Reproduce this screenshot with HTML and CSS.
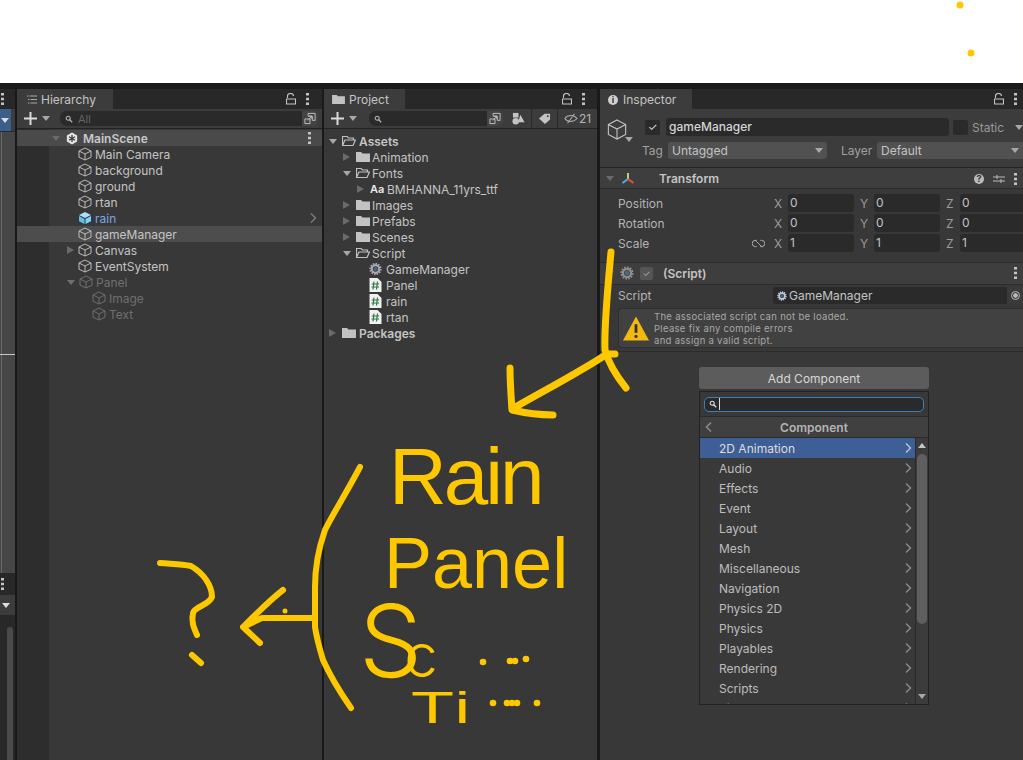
FILE: index.html
```html
<!DOCTYPE html>
<html lang="en">
<head>
<meta charset="utf-8">
<title>Unity Editor</title>
<link rel="stylesheet" href="styles.css">
</head>
<body>
<svg width="0" height="0" class="defs">
  <defs>
    <symbol id="cube" viewBox="0 0 14 14"><path d="M7 1 13 4v6.200L7 13 1 10.200V4zM1 4l6 3 6-3M7 7v6" fill="none" stroke="currentColor" stroke-width="1"/></symbol>
    <symbol id="folder" viewBox="0 0 14 12"><path d="M0 1h5l1.500 1.500H14V11H0z" fill="#c2c2c2"/></symbol>
    <symbol id="open" viewBox="0 0 14 12"><path d="M.5 10.500V1.500h4.500l1.500 1.500h5v2M.5 10.500 3 5h10.500L11 10.500z" fill="none" stroke="#c2c2c2" stroke-width="1.200"/></symbol>
    <symbol id="gear" viewBox="0 0 14 14"><circle cx="7" cy="7" r="5.300" fill="none" stroke="currentColor" stroke-width="2.600" stroke-dasharray="1.600 1.100"/><circle cx="7" cy="7" r="4" fill="none" stroke="currentColor" stroke-width="2.200"/><circle cx="7" cy="7" r="2.200" fill="#46698f"/></symbol>
    <symbol id="script" viewBox="0 0 12 14"><path d="M0 0h8l4 4v10H0z" fill="#f1f1f1"/><path d="M4.500 3.500 3.500 11.500M8 3.500 7 11.500M2.200 6h7.600M2 9h7.600" stroke="#2c7a3f" stroke-width="1.200" fill="none"/></symbol>
    <symbol id="chev" viewBox="0 0 8 12"><path d="M2 1.500 6.500 6 2 10.500" fill="none" stroke="currentColor" stroke-width="1.400"/></symbol>
    <symbol id="search" viewBox="0 0 10 10"><circle cx="4" cy="4" r="2.500" fill="none" stroke="currentColor" stroke-width="1.400"/><path d="M6 6l3 3" stroke="currentColor" stroke-width="1.600"/></symbol>
    <symbol id="lock" viewBox="0 0 10 12"><path d="M1.500 5V3a3 2.500 0 0 1 6 0M.5 6h9v5H.5z" fill="none" stroke="currentColor" stroke-width="1.100"/></symbol>
    <symbol id="pop" viewBox="0 0 14 14"><path d="M5 1.500h7.500V9H9.500V4.500H5zM1.500 7.500H7v5H1.500zM5 9l4-4.500M6 4.500h3V7.500" fill="none" stroke="currentColor" stroke-width="1"/></symbol>
    <symbol id="plus" viewBox="0 0 13 13"><path d="M6.500 0v13M0 6.500h13" stroke="#dcdcdc" stroke-width="2" fill="none"/></symbol>
    <symbol id="kebab" viewBox="0 0 3 12"><path d="M0 0h3v2.500H0zM0 4.700h3v2.500H0zM0 9.500h3V12H0z" fill="#c4c4c4"/></symbol>
  </defs>
</svg>

<div class="top"></div>
<div class="editor">
  <aside class="sliver">
    <div class="sliver-dots"><svg class="ic dots"><use href="#kebab"/></svg></div>
    <div class="sliver-btn"><i class="tri down"></i></div>
    <div class="sliver-body"></div>
    <div class="sliver-dots lower"><svg class="ic dots"><use href="#kebab"/></svg></div>
    <div class="sliver-btn small"><i class="tri down"></i></div>
    <div class="sliver-scroll"></div>
  </aside>

  <section class="panel hierarchy">
    <div class="tabbar">
      <div class="tab hier-tab"><svg class="ic listi" viewBox="0 0 10 9"><path d="M2.500 1H10M3.500 4.500H10M3.500 8H10M0 1h1.500M1 4.500h1.500M1 8h1.500" stroke="#aaa" fill="none"/></svg>Hierarchy</div>
      <div class="tab-tools"><svg class="ic lock"><use href="#lock"/></svg><svg class="ic dots"><use href="#kebab"/></svg></div>
    </div>
    <div class="toolbar">
      <svg class="ic plus"><use href="#plus"/></svg><i class="tri down"></i>
      <div class="search grow"><svg class="ic s"><use href="#search"/></svg><span class="ph">All</span><svg class="ic pop"><use href="#pop"/></svg></div>
    </div>
    <div class="tree">
      <div class="scene-row"><i class="tri down dim"></i><svg class="unity" viewBox="0 0 14 14"><path d="M7 0 13 3.500v7L7 14 1 10.500v-7z" fill="#e4e4e4"/><path d="M7 3v8M3.500 9 7 7l3.500 2M3.500 5 7 7l3.500-2" stroke="#3c3c3c" stroke-width="1.500" fill="none"/></svg><b>MainScene</b><svg class="ic dots right"><use href="#kebab"/></svg></div>
      <div class="row l1"><svg class="ic cube"><use href="#cube"/></svg>Main Camera</div>
      <div class="row l1"><svg class="ic cube"><use href="#cube"/></svg>background</div>
      <div class="row l1"><svg class="ic cube"><use href="#cube"/></svg>ground</div>
      <div class="row l1"><svg class="ic cube"><use href="#cube"/></svg>rtan</div>
      <div class="row l1 prefab"><svg class="cube solid" viewBox="0 0 14 14"><path d="M7 1 13 4 7 7 1 4z" fill="#a6e2ff"/><path d="M1 5v5.200L6.500 13V8z" fill="#5ec0f2"/><path d="M13 5v5.200L7.500 13V8z" fill="#7fd2fa"/></svg>rain<svg class="ic chev right"><use href="#chev"/></svg></div>
      <div class="row l1 selected"><svg class="ic cube"><use href="#cube"/></svg>gameManager</div>
      <div class="row l0"><i class="tri rightward"></i><svg class="ic cube"><use href="#cube"/></svg>Canvas</div>
      <div class="row l1"><svg class="ic cube"><use href="#cube"/></svg>EventSystem</div>
      <div class="row l0 off"><i class="tri down"></i><svg class="ic cube"><use href="#cube"/></svg>Panel</div>
      <div class="row l2 off"><svg class="ic cube"><use href="#cube"/></svg>Image</div>
      <div class="row l2 off"><svg class="ic cube"><use href="#cube"/></svg>Text</div>
    </div>
  </section>

  <section class="panel project">
    <div class="tabbar">
      <div class="tab proj-tab"><svg class="ic folder"><use href="#folder"/></svg>Project</div>
      <div class="tab-tools"><svg class="ic lock"><use href="#lock"/></svg><svg class="ic dots"><use href="#kebab"/></svg></div>
    </div>
    <div class="toolbar">
      <svg class="ic plus"><use href="#plus"/></svg><i class="tri down"></i>
      <div class="search proj-search"><svg class="ic s"><use href="#search"/></svg><svg class="ic pop"><use href="#pop"/></svg></div>
      <div class="tb-btn"><svg class="ic tbi" viewBox="0 0 14 14"><circle cx="4" cy="10" r="3.500" fill="#c4c4c4"/><rect x="1" y="1" width="6" height="5" fill="#c4c4c4"/><path d="M9 3l4.500 8H6.500z" fill="#c4c4c4"/></svg></div>
      <div class="tb-btn"><svg class="ic tbi" viewBox="0 0 14 14"><path d="M1 7 7 2h6v6l-5.500 5z" fill="#c4c4c4"/><circle cx="10.500" cy="4.500" r="1" fill="#3c3c3c"/></svg></div>
      <div class="tb-btn eye"><svg class="ic eyei" viewBox="0 0 16 12"><path d="M1 6c3-4.500 10-4.500 14 0-4 4.500-11 4.500-14 0zM12 .5 4 11.500" fill="none" stroke="#aaa" stroke-width="1.200"/></svg>21</div>
    </div>
    <div class="tree files">
      <div class="frow b0"><i class="tri down"></i><svg class="ic fold"><use href="#open"/></svg><b>Assets</b></div>
      <div class="frow b1"><i class="tri rightward"></i><svg class="ic fold"><use href="#folder"/></svg>Animation</div>
      <div class="frow b1"><i class="tri down"></i><svg class="ic fold"><use href="#open"/></svg>Fonts</div>
      <div class="frow b2"><i class="tri rightward"></i><b class="aa">Aa</b>BMHANNA_11yrs_ttf</div>
      <div class="frow b1"><i class="tri rightward"></i><svg class="ic fold"><use href="#folder"/></svg>Images</div>
      <div class="frow b1"><i class="tri rightward"></i><svg class="ic fold"><use href="#folder"/></svg>Prefabs</div>
      <div class="frow b1"><i class="tri rightward"></i><svg class="ic fold"><use href="#folder"/></svg>Scenes</div>
      <div class="frow b1"><i class="tri down"></i><svg class="ic fold"><use href="#open"/></svg>Script</div>
      <div class="frow b3"><svg class="ic file gear-c"><use href="#gear"/></svg>GameManager</div>
      <div class="frow b3"><svg class="ic file"><use href="#script"/></svg>Panel</div>
      <div class="frow b3"><svg class="ic file"><use href="#script"/></svg>rain</div>
      <div class="frow b3"><svg class="ic file"><use href="#script"/></svg>rtan</div>
      <div class="frow b0"><i class="tri rightward"></i><svg class="ic fold"><use href="#folder"/></svg><b>Packages</b></div>
    </div>
  </section>

  <section class="panel inspector">
    <div class="tabbar">
      <div class="tab insp-tab"><span class="info">i</span>Inspector</div>
      <div class="tab-tools"><svg class="ic lock"><use href="#lock"/></svg><svg class="ic dots"><use href="#kebab"/></svg></div>
    </div>
    <div class="go-head">
      <div class="go-icon"><svg class="big-cube" viewBox="0 0 22 24"><path d="M11 1.500 20.500 6.500v11L11 22.500 1.500 17.500v-11zM1.500 6.500 11 11.500l9.500-5M11 11.500v11" fill="none" stroke="#c4c4c4" stroke-width="1.200"/></svg><i class="tri down small-tri"></i></div>
      <div class="go-fields">
        <div class="go-line">
          <span class="check on">✓</span>
          <div class="namebox">gameManager</div>
          <span class="check"></span>
          <span class="static">Static</span>
          <i class="tri down"></i>
        </div>
        <div class="go-line second">
          <span class="lbl">Tag</span>
          <div class="drop tag">Untagged<i class="tri down"></i></div>
          <span class="lbl layer">Layer</span>
          <div class="drop lay">Default<i class="tri down"></i></div>
        </div>
      </div>
    </div>

    <div class="comp-head transform">
      <i class="tri down dim"></i>
      <svg class="axis" viewBox="0 0 14 14"><path d="M7 7V1" stroke="#b5d56a" stroke-width="2"/><path d="M7 7 1.500 11" stroke="#4cb4e0" stroke-width="2"/><path d="M7 7l5.500 4" stroke="#e0533f" stroke-width="2"/></svg>
      <b class="ct">Transform</b>
      <span class="comp-tools"><span class="help">?</span><svg class="ic sliders" viewBox="0 0 12 12"><path d="M0 4h12M0 8h12M4 2v4M8 6v4" stroke="#bbb" fill="none"/></svg><svg class="ic dots"><use href="#kebab"/></svg></span>
    </div>
    <div class="vecs">
      <div class="vec"><span class="vname">Position</span><span class="a">X</span><span class="num">0</span><span class="a">Y</span><span class="num">0</span><span class="a">Z</span><span class="num last">0</span></div>
      <div class="vec"><span class="vname">Rotation</span><span class="a">X</span><span class="num">0</span><span class="a">Y</span><span class="num">0</span><span class="a">Z</span><span class="num last">0</span></div>
      <div class="vec"><span class="vname">Scale<svg class="ic link" viewBox="0 0 14 10"><path d="M5 1.500H3.500a3.500 3.500 0 0 0 0 7H5M9 1.500h1.500a3.500 3.500 0 0 1 0 7H9M3 1l8 8" fill="none" stroke="#aaa" stroke-width="1.100"/></svg></span><span class="a">X</span><span class="num">1</span><span class="a">Y</span><span class="num">1</span><span class="a">Z</span><span class="num last">1</span></div>
    </div>

    <div class="comp-head script-head">
      <i class="tri down dim"></i>
      <svg class="ic gear2"><use href="#gear"/></svg>
      <span class="check faint">✓</span>
      <b class="ct">(Script)</b>
      <span class="comp-tools"><svg class="ic dots"><use href="#kebab"/></svg></span>
    </div>
    <div class="script-row"><span class="vname">Script</span><div class="objfield"><svg class="ic mini"><use href="#gear"/></svg>GameManager<span class="target"><i></i></span></div></div>
    <div class="warn">
      <svg class="warn-ic" viewBox="0 0 24 24"><path d="M12 1 24 23H0z" fill="#f4b90f"/><path d="M12 8v8" stroke="#333" stroke-width="2.600"/><circle cx="12" cy="19.300" r="1.500" fill="#333"/></svg>
      <p>The associated script can not be loaded.<br>Please fix any compile errors<br>and assign a valid script.</p>
    </div>
    <div class="comp-end"></div>

    <div class="add-wrap">
      <button class="add-btn">Add Component</button>
      <div class="popup">
        <div class="pop-search"><div class="pop-input"><svg class="ic s2"><use href="#search"/></svg><span class="caret"></span></div></div>
        <div class="pop-title"><svg class="ic back" viewBox="0 0 8 12"><path d="M6 1.500 1.500 6 6 10.500" fill="none" stroke="#8a8a8a" stroke-width="1.600"/></svg>Component</div>
        <div class="pop-body">
          <ul class="menu">
            <li class="active">2D Animation<svg class="ic chev"><use href="#chev"/></svg></li>
            <li>Audio<svg class="ic chev"><use href="#chev"/></svg></li>
            <li>Effects<svg class="ic chev"><use href="#chev"/></svg></li>
            <li>Event<svg class="ic chev"><use href="#chev"/></svg></li>
            <li>Layout<svg class="ic chev"><use href="#chev"/></svg></li>
            <li>Mesh<svg class="ic chev"><use href="#chev"/></svg></li>
            <li>Miscellaneous<svg class="ic chev"><use href="#chev"/></svg></li>
            <li>Navigation<svg class="ic chev"><use href="#chev"/></svg></li>
            <li>Physics 2D<svg class="ic chev"><use href="#chev"/></svg></li>
            <li>Physics<svg class="ic chev"><use href="#chev"/></svg></li>
            <li>Playables<svg class="ic chev"><use href="#chev"/></svg></li>
            <li>Rendering<svg class="ic chev"><use href="#chev"/></svg></li>
            <li>Scripts<svg class="ic chev"><use href="#chev"/></svg></li>
            <li>Tilemap<svg class="ic chev"><use href="#chev"/></svg></li>
          </ul>
          <div class="scrollbar"><i class="tri up"></i><div class="thumb"></div><i class="tri down"></i></div>
        </div>
      </div>
    </div>
  </section>
</div>

<svg class="marks" viewBox="0 0 1023 760" width="1023" height="760">
  <g fill="none" stroke="#fec800" stroke-width="6" stroke-linecap="round" stroke-linejoin="round">
    <path d="M611 252C608 285 604 325 605 350 609 365 618 378 626 388" stroke-width="7"/>
    <path d="M615 354H607C580 372 545 390 512 409M510 368C510 382 511 396 512 410 525 413 540 415 553 415" stroke-width="7"/>
    <path d="M360 467C348 490 334 512 325 530 318 550 315 570 315 587V627C317 640 320 650 323 660 332 680 342 695 351 708"/>
    <path d="M313 618H262L243 627 260 643M243 627C255 615 270 600 283 590"/>
    <path d="M160 563C172 564 182 564 191 566 203 573 212 585 212 597 208 606 195 606 193 613 191 622 194 628 197 635M192 655 201 663"/>
  </g>
  <g fill="#fec800">
    <circle cx="960" cy="5" r="3.500"/>
    <circle cx="971" cy="53" r="3.500"/>
    <circle cx="285" cy="611" r="2.500"/>
    <circle cx="483" cy="662" r="3.300"/><circle cx="510" cy="661" r="3.300"/><circle cx="515" cy="661" r="3.300"/><circle cx="526" cy="659" r="3.300"/>
    <circle cx="493" cy="703" r="3.300"/><circle cx="507" cy="703" r="3.300"/><circle cx="512" cy="703" r="3.300"/><circle cx="517" cy="703" r="3.300"/><circle cx="537" cy="703" r="3.300"/>
  </g>
</svg>
<div class="note n-rain">Rain</div>
<div class="note n-panel">Panel</div>
<div class="note n-sc">S<span class="n-c">c</span></div>
<div class="note n-ti">Ti</div>
</body>
</html>
```
FILE: styles.css
```css
* { box-sizing: border-box; }
html, body { margin: 0; padding: 0; }
body { width: 1023px; height: 760px; overflow: hidden; background: #fff; position: relative; font-family: Inter, "Noto Sans", "Liberation Sans", sans-serif; font-size: 12px; color: #c4c4c4; }
.defs { position: absolute; }
.top { height: 83px; background: #fff; }
.editor { height: 677px; background: #191919; display: flex; padding-top: 6px; }
.ic { display: inline-block; flex: none; }
.tri { display: inline-block; flex: none; width: 0; height: 0; border-style: solid; border-color: transparent; }
.tri.down { border-width: 5px 4px 0; border-top-color: #a8a8a8; }
.tri.up { border-width: 0 4px 5px; border-bottom-color: #c4c4c4; }
.tri.rightward { border-width: 4.500px 0 4.500px 7px; border-left-color: #6a6a6a; }
.tri.dim { border-top-color: #6a6a6a; }
.dots { width: 3px; height: 12px; }

.sliver { width: 15px; flex: none; display: flex; flex-direction: column; background: #282828; margin-right: 2px; }
.sliver-dots { height: 20px; flex: none; display: flex; align-items: center; padding-left: 1px; }
.sliver-btn { height: 22px; flex: none; background: linear-gradient(90deg, #3a5f8a 11px, #3c3c3c 11px); display: flex; align-items: center; padding-left: 1px; }
.sliver-btn .tri { border-top-color: #ddd; }
.sliver-body { height: 442px; flex: none; background-color: #464646; border-top: 1px solid #2a2a2a; background-image: linear-gradient(#c8c8c8,#c8c8c8), linear-gradient(#6a6a6a,#6a6a6a); background-size: 100% 1px, 1px 100%; background-position: 0 222px, 1px 0; background-repeat: no-repeat; }
.sliver-dots.lower { height: 22px; }
.sliver-btn.small { height: 20px; background: #3c3c3c; padding-left: 2px; }
.sliver-scroll { width: 6px; flex: 1; margin: 12px 0 0 7px; background: #4a4a4a; border-radius: 3px 3px 0 0; }

.panel { background: #383838; display: flex; flex-direction: column; }
.hierarchy { width: 305px; flex: none; margin-right: 2px; }
.project { width: 273px; flex: none; margin-right: 3px; }
.inspector { width: 423px; flex: none; min-width: 0; overflow: hidden; }
.tabbar { height: 20px; background: #282828; display: flex; justify-content: space-between; align-items: stretch; flex: none; }
.tab { background: #3c3c3c; display: flex; align-items: center; font-size: 12px; color: #c4c4c4; padding-top: 1px; }
.hier-tab { width: 96px; padding-left: 10px; }
.proj-tab { width: 81px; padding-left: 8px; }
.insp-tab { width: 92px; padding-left: 8px; }
.listi { width: 10px; height: 9px; margin-right: 4px; }
.proj-tab .folder { width: 13px; height: 11px; margin-right: 4px; }
.info { width: 10px; height: 10px; border-radius: 50%; background: #d0d0d0; color: #333; font-size: 9px; font-weight: 700; line-height: 10px; text-align: center; margin-right: 5px; }
.tab-tools { display: flex; align-items: center; gap: 10px; padding-right: 13px; color: #c4c4c4; }
.project .tab-tools { padding-right: 12px; }
.inspector .tab-tools { padding-right: 6px; }
.lock { width: 10px; height: 12px; }

.toolbar { height: 20px; flex: none; display: flex; align-items: center; background: #3c3c3c; border-bottom: 1px solid #232323; padding-left: 7px; }
.plus { width: 13px; height: 13px; }
.toolbar > .tri { margin: 0 0 0 5px; }
.search { height: 15px; background: #2a2a2a; border-radius: 7px; margin-left: 10px; display: flex; align-items: center; padding-left: 5px; color: #8a8a8a; position: relative; }
.search.grow { flex: 1; margin-right: 4px; }
.proj-search { width: 134px; margin-left: 12px; }
.search .s { width: 8px; height: 8px; color: #b0b0b0; }
.ph { color: #666; margin-left: 5px; font-size: 11px; }
.pop { position: absolute; right: 0; top: 0; height: 15px; width: 16px; color: #c4c4c4; padding: 1px; background: #444; border-radius: 0 5px 5px 0; }
.tb-btn { height: 19px; border-left: 1px solid #2a2a2a; width: 26px; display: flex; align-items: center; justify-content: center; }
.proj-search + .tb-btn { margin-left: 2px; border-left: 0; }
.tbi { width: 13px; height: 13px; }
.tb-btn.eye { flex: 1; color: #b4b4b4; gap: 1px; }
.eyei { width: 14px; height: 11px; }

.tree { flex: 1; }
.hierarchy .tree { padding-top: 1px; background: linear-gradient(#2d2d2d,#2d2d2d) 0 0 / 32px 100% no-repeat; }
.scene-row { height: 16px; background: #4a4a4a; display: flex; align-items: center; padding: 0 11px 0 35px; position: relative; color: #c8c8c8; }
.scene-row b { font-weight: 600; margin-left: 5px; }
.unity { width: 12px; height: 13px; margin-left: 6px; flex: none; }
.right { margin-left: auto; }
.row { height: 16px; display: flex; align-items: center; color: #c4c4c4; white-space: nowrap; }
.cube { width: 14px; height: 14px; margin-right: 3px; color: #bcbcbc; }
.cube.solid { flex: none; }
.l1 { padding-left: 61px; }
.l0 { padding-left: 50px; }
.l0 .tri { margin-right: 4px; }
.l2 { padding-left: 75px; }
.row.off { color: #6f6f6f; }
.row.off .cube { color: #6f6f6f; }
.row.off .tri { border-top-color: #6f6f6f; }
.prefab { color: #7ba6e6; padding-right: 5px; }
.row .chev { width: 8px; height: 12px; color: #7c7c7c; }
.selected { background: #4d4d4d; }

.files { padding-top: 4px; }
.frow { height: 16px; display: flex; align-items: center; color: #c4c4c4; white-space: nowrap; }
.frow .tri { margin-right: 6px; }
.frow .tri.down { margin-right: 5px; }
.frow.b0 { padding-left: 5px; }
.frow.b1 { padding-left: 19px; }
.frow.b2 { padding-left: 33px; }
.frow.b3 { padding-left: 45px; }
.fold { width: 14px; height: 12px; margin-right: 2px; }
.frow.b0 .fold { margin-right: 3px; }
.frow b { font-weight: 600; }
.aa { color: #e8e8e8; width: 17px; font-size: 11px; }
.file { width: 13px; height: 14px; margin-right: 4px; color: #a8aab0; }

.go-head { height: 59px; background: #3c3c3c; border-bottom: 1px solid #232323; display: flex; flex: none; padding: 9px 0 0 7px; overflow: hidden; }
.go-icon { width: 38px; position: relative; flex: none; }
.big-cube { width: 20px; height: 23px; display: block; }
.small-tri { position: absolute; left: 18px; top: 19px; }
.go-fields { flex: 1; display: flex; flex-direction: column; gap: 6px; min-width: 0; }
.go-line { display: flex; align-items: center; height: 18px; white-space: nowrap; }
.check { width: 15px; height: 15px; background: #2a2a2a; border-radius: 2px; flex: none; text-align: center; line-height: 15px; color: #ddd; font-size: 11px; }
.namebox { width: 283px; height: 18px; margin: 0 4px 0 6px; background: #2a2a2a; border-radius: 3px; padding-left: 3px; line-height: 18px; color: #d4d4d4; font-weight: 500; flex: none; }
.static { margin: 0 11px 0 4px; color: #9a9a9a; }
.lbl { color: #a0a0a0; flex: none; }
.second { margin-left: -3px; height: 17px; }
.second .lbl:first-child { width: 26px; }
.drop { height: 17px; background: #515151; border-radius: 3px; padding: 0 4px; display: flex; align-items: center; justify-content: space-between; color: #c4c4c4; flex: none; }
.drop.tag { width: 159px; }
.layer { margin-left: 14px; width: 36px; }
.drop.lay { width: 146px; border-radius: 3px 0 0 3px; }

.comp-head { height: 21px; flex: none; background: #3e3e3e; display: flex; align-items: center; padding: 0 6px 0 6px; border-bottom: 1px solid #2c2c2c; position: relative; }
.transform { padding-top: 1px; }
.axis { width: 14px; height: 14px; margin-left: 7px; flex: none; }
.ct { font-weight: 600; color: #c4c4c4; }
.transform .ct { margin-left: 24px; }
.comp-tools { margin-left: auto; display: flex; align-items: center; gap: 9px; }
.help { width: 10px; height: 10px; border-radius: 50%; background: #bbb; color: #333; font-size: 9px; line-height: 10px; font-weight: 700; text-align: center; }
.sliders { width: 12px; height: 12px; }
.vecs { padding-top: 4px; flex: none; }
.vec { height: 20px; display: flex; align-items: center; padding-left: 18px; white-space: nowrap; }
.vname { width: 156px; flex: none; color: #b4b4b4; display: flex; align-items: center; justify-content: space-between; padding-right: 9px; }
.link { width: 13px; height: 9px; }
.a { width: 14px; color: #9a9a9a; flex: none; }
.num { width: 66px; flex: none; height: 18px; background: #2a2a2a; border-radius: 3px; padding-left: 2px; line-height: 18px; margin-right: 6px; color: #c4c4c4; }
.num.last { flex: 1; margin-right: 0; border-radius: 3px 0 0 3px; }
.script-head { margin-top: 9px; height: 23px; border-top: 1px solid #2c2c2c; padding-bottom: 1px; }
.gear2 { width: 14px; height: 14px; margin-left: 6px; color: #8f8f8f; }
.check.faint { margin-left: 6px; width: 13px; height: 13px; line-height: 13px; background: #555; color: #aaa; font-size: 9px; }
.script-head .ct { margin-left: 10px; }
.script-row { height: 20px; display: flex; align-items: center; padding: 1px 0 0 18px; flex: none; }
.script-row .vname { width: 155px; }
.objfield { flex: 1; height: 17px; background: #2a2a2a; border-radius: 3px 0 0 3px; display: flex; align-items: center; padding-left: 4px; color: #c4c4c4; position: relative; }
.mini { width: 10px; height: 10px; margin-right: 2px; color: #bfc8d4; }
.target { position: absolute; right: 0; top: 0; width: 16px; height: 17px; background: #3a3a3a; display: flex; align-items: center; justify-content: center; }
.target i { width: 9px; height: 9px; border: 1px solid #bbb; border-radius: 50%; background: radial-gradient(#bbb 2px, transparent 2.500px); }
.warn { height: 40px; margin: 3px 0 0 18px; background: #414141; border: 1px solid #2f2f2f; border-right: 0; border-radius: 3px 0 0 3px; display: flex; align-items: center; padding-left: 4px; flex: none; }
.warn-ic { width: 26px; height: 27px; flex: none; }
.warn p { margin: 2px 0 0 5px; font-size: 9.500px; line-height: 12px; color: #a8a8a8; letter-spacing: .3px; }
.comp-end { height: 4px; flex: none; border-bottom: 1px solid #2c2c2c; }

.add-wrap { width: 230px; margin: 15px 0 0 99px; flex: none; }
.add-btn { display: block; width: 100%; height: 22px; border: 0; border-radius: 3px; background: #5c5c5c; color: #d8d8d8; font: inherit; text-align: center; padding: 0; }
.popup { margin-top: 2px; height: 314px; background: #393939; border: 1px solid #222; display: flex; flex-direction: column; overflow: hidden; }
.pop-search { height: 25px; display: flex; align-items: center; padding: 0 4px; background: #383838; border-bottom: 1px solid #2a2a2a; flex: none; }
.pop-input { width: 100%; height: 15px; background: #2a2a2a; border: 1px solid #3c7fb8; border-radius: 5px; display: flex; align-items: center; padding-left: 4px; }
.s2 { width: 8px; height: 8px; color: #ddd; }
.caret { width: 1px; height: 12px; background: #ddd; margin-left: 2px; }
.pop-title { height: 21px; flex: none; background: #404040; display: flex; align-items: center; justify-content: center; font-weight: 600; color: #b4b4b4; position: relative; border-bottom: 1px solid #2a2a2a; }
.back { position: absolute; left: 5px; top: 4px; width: 8px; height: 12px; }
.pop-body { flex: 1; display: flex; overflow: hidden; min-height: 0; }
.menu { list-style: none; margin: 0; padding: 0; flex: 1; min-width: 0; }
.menu li { height: 20px; display: flex; align-items: center; justify-content: space-between; padding: 0 3px 0 19px; color: #bdbdbd; }
.menu li.active { background: #3e5f96; color: #dcdcdc; }
.menu .chev { width: 8px; height: 12px; color: #8e8e8e; }
.menu .active .chev { color: #b8c4d8; }
.scrollbar { width: 13px; flex: none; border-left: 1px solid #2a2a2a; background: #3c3c3c; display: flex; flex-direction: column; align-items: center; padding: 5px 0 5px 0; }
.thumb { width: 10px; height: 170px; margin: 6px 0 auto; background: #5f5f5f; border-radius: 5px; flex: none; }

.marks { position: absolute; left: 0; top: 0; pointer-events: none; }
.note { position: absolute; color: #fec800; font-family: "Liberation Sans", sans-serif; font-weight: 400; line-height: .8; white-space: nowrap; }
.n-rain { left: 389px; top: 445px; font-size: 80px; letter-spacing: -3px; }
.n-panel { left: 384px; top: 535px; font-size: 72px; }
.n-sc { left: 359px; top: 601px; font-size: 100px; font-family: Inter, sans-serif; font-weight: 300; }
.n-c { font-size: 60px; margin-left: -18px; }
.n-ti { left: 411px; top: 690px; font-size: 44px; letter-spacing: 2px; transform: scaleX(1.6); transform-origin: left top; }
```
